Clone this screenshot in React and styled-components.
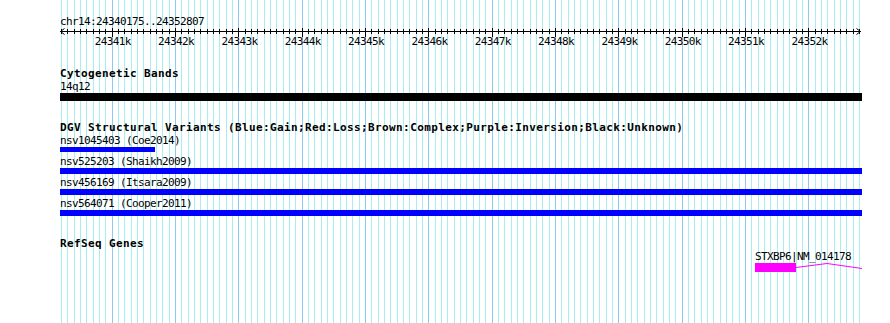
import React from 'react';
import styled, { createGlobalStyle } from 'styled-components';

const START = 24340175;
const END = 24352807;
const LEFT = 60;
const SPAN = 800;
const toX = (bp) => LEFT + ((bp - START) / (END - START)) * SPAN;

const GlobalStyle = createGlobalStyle`
  html, body {
    margin: 0;
    padding: 0;
    background: #ffffff;
  }
`;

const Panel = styled.div`
  position: relative;
  width: 890px;
  height: 323px;
  overflow: hidden;
  background: #ffffff;
  font-family: 'DejaVu Sans Mono', 'Liberation Mono', monospace;
  color: #000000;
`;

const GridLayer = styled.svg`
  position: absolute;
  left: 0;
  top: 0;
`;

const Content = styled.div`
  position: relative;
  display: flex;
  flex-direction: column;
  align-items: flex-start;
  padding: 15px 0 0 ${LEFT}px;
`;

const Label = styled.div`
  font-size: 11px;
  letter-spacing: -0.62px;
  line-height: 13px;
  height: 13px;
  white-space: pre;
`;

const Title = styled.div`
  font-size: 11px;
  font-weight: bold;
  letter-spacing: 0.38px;
  line-height: 12px;
  height: 12px;
  margin-top: ${(p) => p.$gap}px;
  white-space: pre;
`;

const Ruler = styled.div`
  position: relative;
  width: 805px;
  height: 20px;
`;

const TickLabel = styled.span`
  position: absolute;
  top: 7px;
  font-size: 11px;
  letter-spacing: -0.62px;
  line-height: 13px;
  transform: translateX(-50%);
  white-space: pre;
`;

const Row = styled.div`
  display: flex;
  flex-direction: column;
  height: 21px;
`;

const Bar = styled.div`
  height: ${(p) => p.$h}px;
  background: ${(p) => p.$color};
`;

const Gene = styled.div`
  display: flex;
  flex-direction: column;
`;

const GeneGlyph = styled.div`
  display: flex;
  align-items: flex-start;
  height: 10px;
`;

const GeneBox = styled.div`
  width: 41px;
  height: 9px;
  background: #ff00ff;
`;

const ticks = [];
for (let bp = 24340200; bp <= 24352800; bp += 100) ticks.push(bp);
const majors = [];
for (let kb = 24341; kb <= 24352; kb++) majors.push(kb);

const variants = [
  { name: 'nsv1045403 (Coe2014)', start: START, end: 24341675, h: 5 },
  { name: 'nsv525203 (Shaikh2009)', start: START, end: 24352839, h: 6 },
  { name: 'nsv456169 (Itsara2009)', start: START, end: 24352839, h: 6 },
  { name: 'nsv564071 (Cooper2011)', start: START, end: 24352839, h: 6 },
];

const px = (bp) => Math.floor(toX(bp)) + 0.5;

function Grid() {
  return (
    <GridLayer width="890" height="323">
      {ticks.map((bp) => (
        <line
          key={bp}
          x1={px(bp)}
          x2={px(bp)}
          y1="0"
          y2="323"
          stroke={bp % 1000 === 0 ? '#8ccbf0' : '#a8eef0'}
          strokeWidth="1"
        />
      ))}
    </GridLayer>
  );
}

function Scale() {
  return (
    <Ruler>
      <svg width="805" height="20" style={{ display: 'block' }}>
        <g stroke="#000" strokeWidth="1" fill="none">
          <line x1="0" x2="801" y1="3.5" y2="3.5" />
          <polyline points="4.5,0.5 0.5,3.5 4.5,6.5" />
          <polyline points="796.5,0.5 800.5,3.5 796.5,6.5" />
          {ticks.map((bp) => {
            const x = px(bp) - LEFT;
            const major = bp % 1000 === 0;
            return <line key={bp} x1={x} x2={x} y1={major ? 0 : 1} y2={major ? 9 : 6} />;
          })}
        </g>
      </svg>
      {majors.map((kb) => (
        <TickLabel key={kb} style={{ left: toX(kb * 1000) - LEFT + 0.5 }}>
          {kb}k
        </TickLabel>
      ))}
    </Ruler>
  );
}

export default function App() {
  const geneStart = 24351149;
  return (
    <>
      <GlobalStyle />
      <Panel>
        <Grid />
        <Content>
          <Label>chr14:24340175..24352807</Label>
          <Scale />

          <Title $gap={20}>Cytogenetic Bands</Title>
          <Label>14q12</Label>
          <Bar $h={8} $color="#000000" style={{ width: 802 }} />

          <Title $gap={21}>
            DGV Structural Variants (Blue:Gain;Red:Loss;Brown:Complex;Purple:Inversion;Black:Unknown)
          </Title>
          {variants.map((v) => (
            <Row key={v.name}>
              <Label>{v.name}</Label>
              <Bar
                $h={v.h}
                $color="#0000ff"
                style={{ marginLeft: toX(v.start) - LEFT, width: toX(v.end) - toX(v.start) }}
              />
            </Row>
          ))}

          <Title $gap={20}>RefSeq Genes</Title>
          <Gene style={{ marginLeft: Math.round(toX(geneStart)) - LEFT }}>
            <Label>STXBP6|NM_014178</Label>
            <GeneGlyph>
              <GeneBox />
              <svg width="67" height="10">
                <polyline
                  points="0,4.5 31,0.5 66,5.5"
                  stroke="#ff00ff"
                  strokeWidth="1"
                  fill="none"
                />
              </svg>
            </GeneGlyph>
          </Gene>
        </Content>
      </Panel>
    </>
  );
}
